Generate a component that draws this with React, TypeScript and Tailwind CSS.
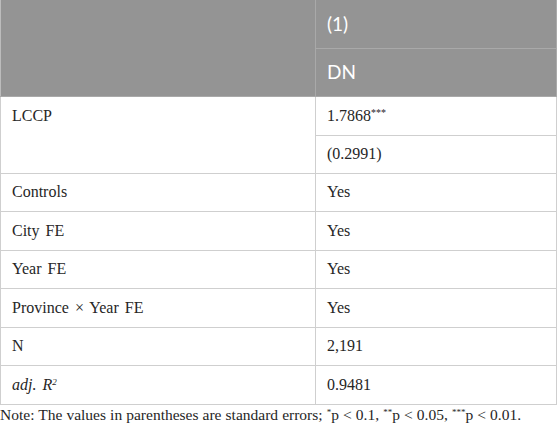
const rows: { label: React.ReactNode; value: React.ReactNode }[] = [
  { label: "Controls", value: "Yes" },
  { label: "City FE", value: "Yes" },
  { label: "Year FE", value: "Yes" },
  { label: "Province × Year FE", value: "Yes" },
  { label: "N", value: "2,191" },
  {
    label: (
      <i>
        adj. R<sup className="text-[9px]">2</sup>
      </i>
    ),
    value: "0.9481",
  },
];

const td = "border border-[#cfcfcf] px-[11px] py-0 align-middle";
const th = "border border-[#a9a9a9] px-[11px] py-0 text-left font-normal align-middle";

export default function App() {
  return (
    <div className="w-[558px] h-[430px] bg-white text-[#262626] font-['Liberation_Serif',serif] text-[16px]">
      <table className="w-[557px] border-collapse table-fixed">
        <colgroup>
          <col className="w-[315px]" />
          <col />
        </colgroup>
        <thead className="bg-[#949494] text-white font-['Lato',sans-serif] text-[19px]">
          <tr className="h-[48px]">
            <th rowSpan={2} className={th + " border-t-0 border-l-[#bcbcbc]"}></th>
            <th className={th + " border-t-0"}>(1)</th>
          </tr>
          <tr className="h-[48px]">
            <th className={th}>DN</th>
          </tr>
        </thead>
        <tbody>
          <tr className="h-[39px]">
            <td rowSpan={2} className={td + " align-top"}>
              <div className="h-[38px] flex items-center">LCCP</div>
            </td>
            <td className={td}>
              1.7868<sup className="text-[10px]">***</sup>
            </td>
          </tr>
          <tr className="h-[38px]">
            <td className={td}>(0.2991)</td>
          </tr>
          {rows.map((r, i) => (
            <tr key={i} className="h-[38.5px]">
              <td className={td + " [word-spacing:2px]"}>{r.label}</td>
              <td className={td}>{r.value}</td>
            </tr>
          ))}
        </tbody>
      </table>
      <p className="text-[15.5px] leading-[19px] [word-spacing:0.2px]">
        Note: The values in parentheses are standard errors; <sup className="text-[9px]">*</sup>p &lt; 0.1,{" "}
        <sup className="text-[9px]">**</sup>p &lt; 0.05, <sup className="text-[9px]">***</sup>p &lt; 0.01.
      </p>
    </div>
  );
}
